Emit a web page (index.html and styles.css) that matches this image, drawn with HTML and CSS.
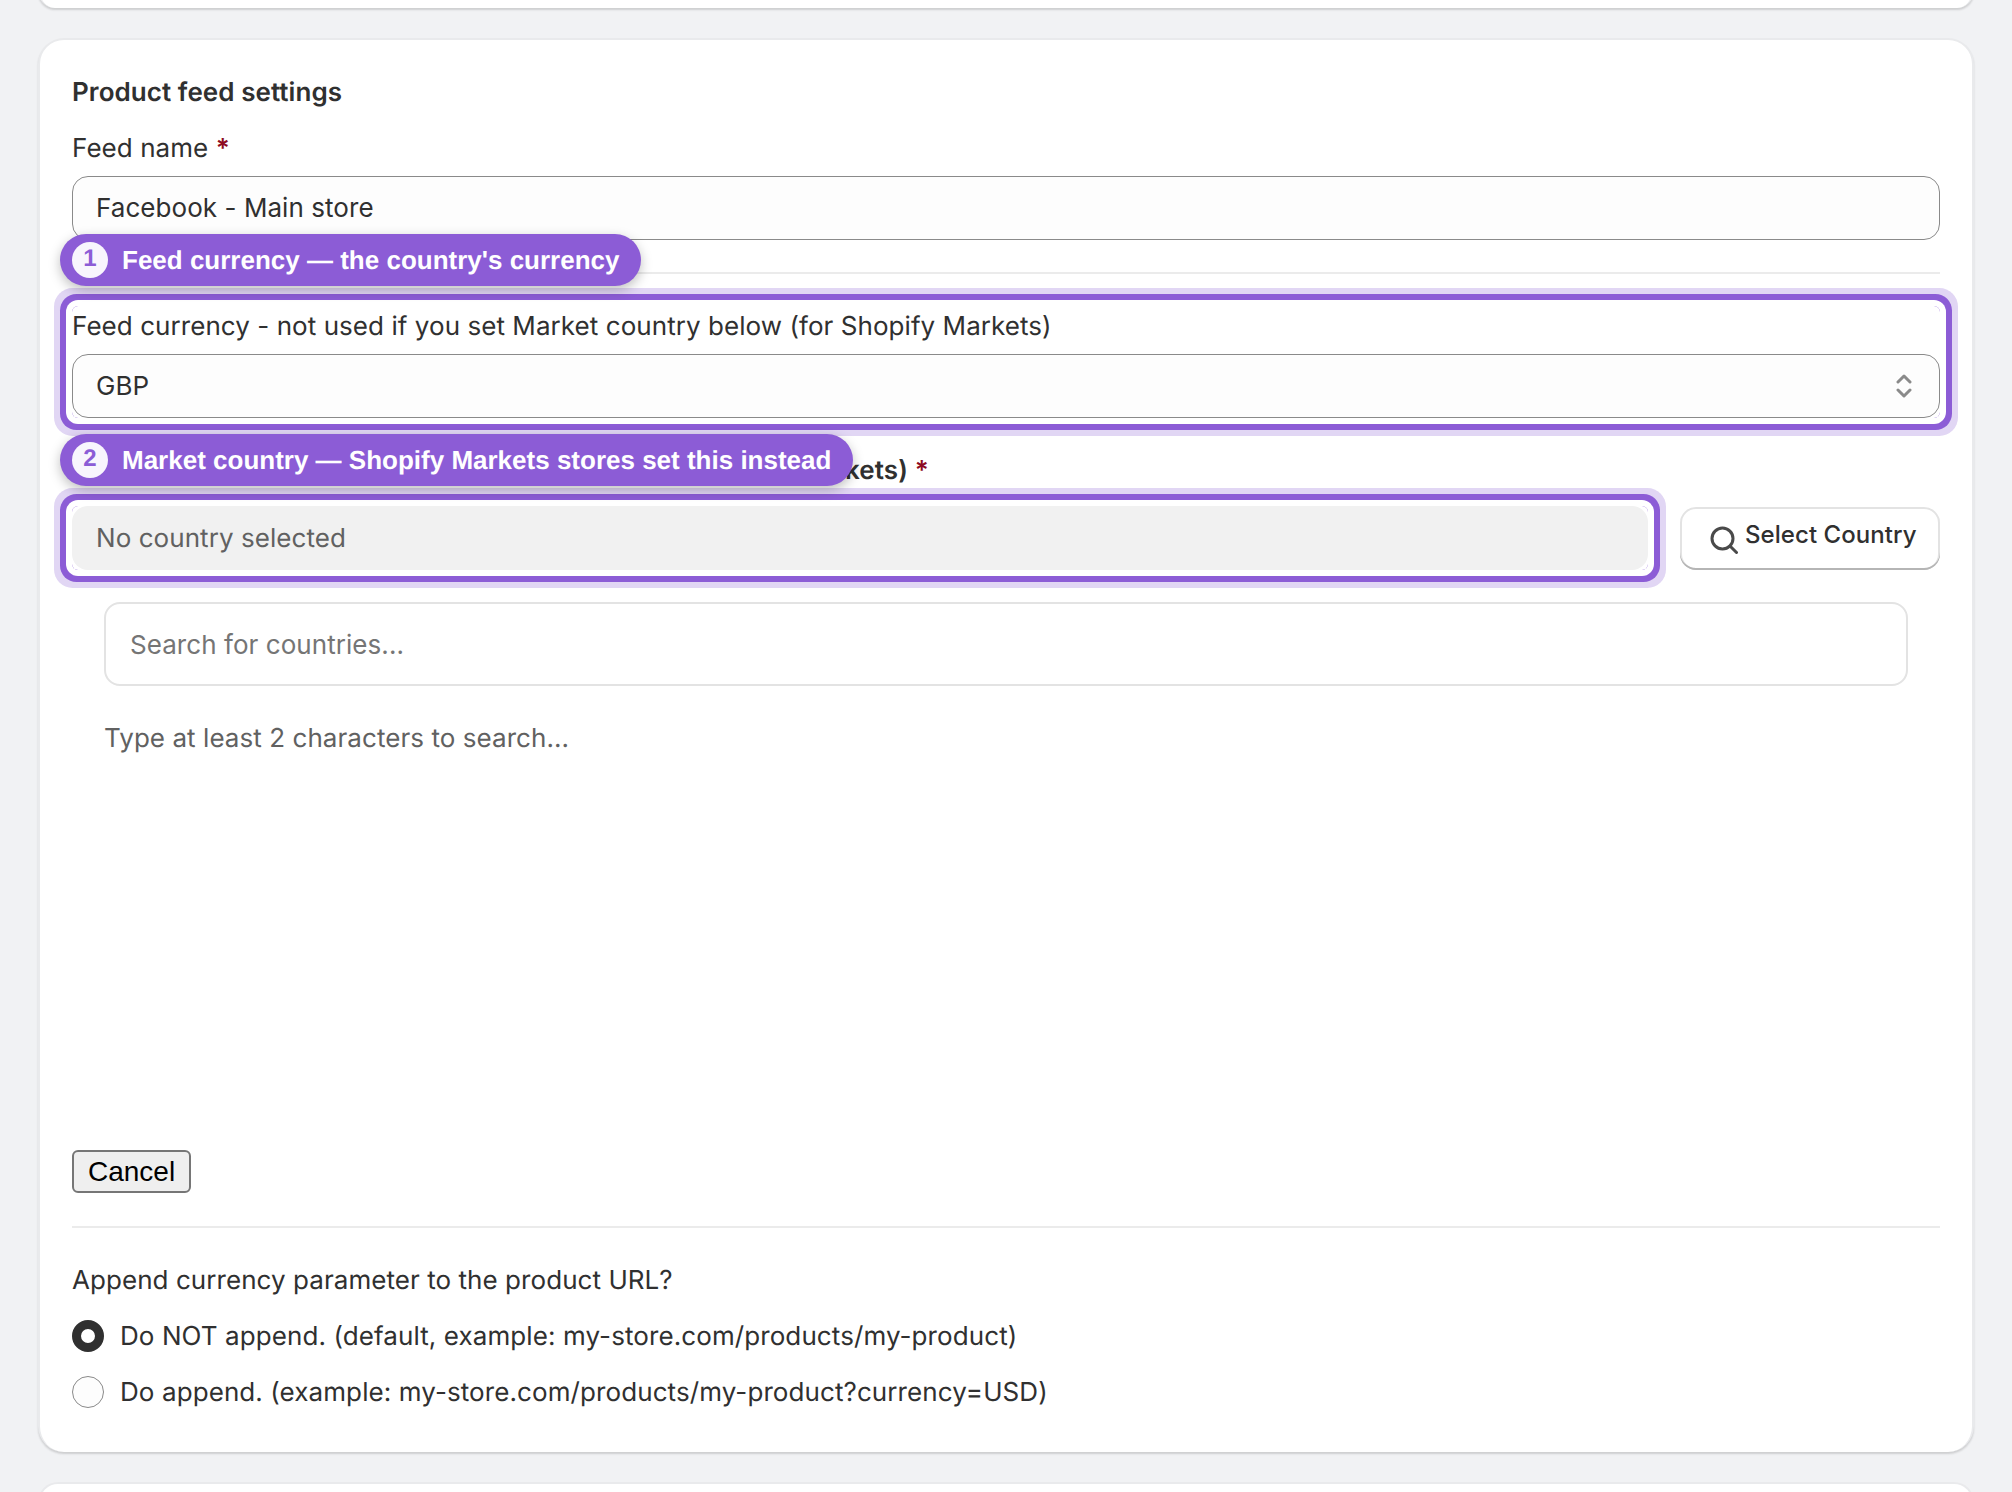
FILE: index.html
```html
<!DOCTYPE html>
<html lang="en">
<head>
<meta charset="utf-8">
<title>Product feed settings</title>
<link rel="stylesheet" href="styles.css">
</head>
<body>
<div class="page">
  <div class="card card-prev"></div>
  <section class="card card-main">
    <h2 class="title">Product feed settings</h2>
    <label class="label">Feed name <span class="req">*</span></label>
    <input class="control control-text" type="text" value="Facebook - Main store">
    <hr class="divider">
    <div class="target target-block">
      <div class="pill"><span class="pill-num">1</span>Feed currency — the country's currency</div>
      <label class="label">Feed currency - not used if you set Market country below (for Shopify Markets)</label>
      <div class="select-wrap">
        <select class="control select"><option>GBP</option></select>
        <svg class="chevrons" width="16" height="24" viewBox="0 0 16 24" fill="none" stroke="#8a8a8a" stroke-width="3" stroke-linecap="round" stroke-linejoin="round"><path d="M2 8l6-6 6 6"/><path d="M2 16l6 6 6-6"/></svg>
      </div>
    </div>
    <label class="label label-strong">Market country (leave this blank if you don't use Shopify Markets) <span class="req">*</span></label>
    <div class="country-row">
      <div class="target target-field">
        <div class="pill"><span class="pill-num">2</span>Market country — Shopify Markets stores set this instead</div>
        <div class="readonly">No country selected</div>
      </div>
      <button class="btn-select" type="button">
        <svg width="28" height="28" viewBox="0 0 28 28" fill="none" stroke="#4a4a4a" stroke-width="3" stroke-linecap="round"><circle cx="12.5" cy="12.5" r="10.5"/><path d="M20.5 20.5l6 6"/></svg>
        <span class="btn-text">Select Country</span>
      </button>
    </div>
    <div class="search-panel">
      <input class="search" type="text" placeholder="Search for countries...">
      <p class="hint">Type at least 2 characters to search...</p>
    </div>
    <button class="btn-cancel" type="button">Cancel</button>
    <hr class="divider divider-low">
    <p class="label">Append currency parameter to the product URL?</p>
    <label class="radio-row"><input class="radio" type="radio" name="append" checked>Do NOT append. (default, example: my-store.com/products/my-product)</label>
    <label class="radio-row"><input class="radio" type="radio" name="append">Do append. (example: my-store.com/products/my-product?currency=USD)</label>
  </section>
  <div class="card card-next"></div>
</div>
</body>
</html>
```
FILE: styles.css
```css
* { box-sizing: border-box; }
html, body { margin: 0; padding: 0; }
body {
  background: #f1f2f4;
  color: #303030;
  font-family: Inter, "Liberation Sans", sans-serif;
  font-size: 26px;
  line-height: 40px;
  letter-spacing: 0.058px;
  height: 1492px;
  overflow: hidden;
  text-rendering: geometricPrecision;
}
.page {
  display: flex;
  flex-direction: column;
  gap: 30px;
  height: 1492px;
  padding: 0 38px;
  overflow: hidden;
}
.card {
  flex: none;
  background: #fff;
  border: 2px solid #e9eaec;
  border-bottom: 0;
  border-radius: 26px;
  box-shadow: 0 2px 2px rgba(26, 26, 26, 0.16);
}
.card-prev {
  height: 34px;
  margin-top: -26px;
}
.card-next {
  height: 40px;
  box-shadow: none;
}
.card-main { padding: 32px 32px 40px; }
.title {
  height: 40px;
  margin: 0 0 16px;
  font-size: 26px;
  line-height: 41px;
  font-weight: 600;
}
.label {
  display: block;
  height: 40px;
  margin: 0 0 8px;
  line-height: 42px;
}
.label-strong {
  margin: 32px 0 16px;
  font-weight: 600;
  letter-spacing: 0.13px;
}
.req { color: #8e0b21; font-weight: 600; }
.control {
  display: block;
  width: 100%;
  height: 64px;
  padding: 0 23px;
  border: 1px solid #8a8a8a;
  border-radius: 16px;
  background: #fdfdfd;
  color: #303030;
  font: inherit;
  letter-spacing: inherit;
  outline: none;
}
.control-text { padding-bottom: 2px; }
.select { appearance: none; }
.select-wrap { position: relative; }
.chevrons {
  position: absolute;
  right: 28px;
  top: 20px;
}
.divider {
  height: 2px;
  margin: 32px 0;
  border: 0;
  background: #ebebeb;
}
.divider-low { margin: 33px 0 32px; }
.target {
  position: relative;
  border-radius: 6px;
  box-shadow:
    0 0 0 6px #fff,
    0 0 0 12px #8c5cd6,
    0 0 0 18px #e1d6f4;
}
.pill {
  position: absolute;
  left: -12px;
  top: -72px;
  z-index: 2;
  display: flex;
  align-items: center;
  gap: 14px;
  height: 52px;
  padding: 0 22px 0 12px;
  border-radius: 26px;
  background: #8c5cd6;
  color: #fff;
  font-family: "Liberation Sans", Arial, sans-serif;
  font-weight: 700;
  letter-spacing: 0;
  white-space: nowrap;
  box-shadow: 0 4px 12px rgba(0, 0, 0, 0.25);
}
.pill-num {
  display: flex;
  align-items: center;
  justify-content: center;
  width: 36px;
  height: 36px;
  padding-bottom: 3px;
  border-radius: 50%;
  background: #f8f5fd;
  color: #8c5cd6;
  font-size: 24px;
  font-weight: 700;
}
.country-row {
  display: flex;
  gap: 32px;
  align-items: center;
}
.target-field { flex: 1; }
.readonly {
  height: 64px;
  padding: 0 24px;
  border-radius: 16px;
  background: #f1f1f1;
  color: #616161;
  line-height: 65px;
}
.btn-select {
  display: flex;
  align-items: center;
  gap: 7px;
  width: 260px;
  height: 63px;
  padding: 4px 0 0 30px;
  border: 0;
  border-radius: 16px;
  background: #fff;
  color: #303030;
  font: inherit;
  font-size: 24px;
  font-weight: 550;
  letter-spacing: inherit;
  box-shadow: inset 0 -2px 0 #b5b5b5, inset 0 0 0 2px #e3e3e3;
}
.btn-text { padding-bottom: 10px; }
.search-panel {
  height: 548px;
  margin: 32px 32px 0;
}
.search {
  display: block;
  width: 100%;
  height: 84px;
  padding: 0 24px;
  border: 2px solid #e3e3e3;
  border-radius: 16px;
  background: #fff;
  color: #303030;
  font: inherit;
  letter-spacing: inherit;
  outline: none;
}
.search::placeholder { color: #757575; opacity: 1; }
.hint {
  height: 40px;
  margin: 32px 0 0;
  color: #616161;
  line-height: 42px;
}
.btn-cancel {
  display: block;
  height: 43px;
  padding: 0 14px;
  border: 2px solid #767676;
  border-radius: 6px;
  background: #efefef;
  color: #000;
  font-family: "Liberation Sans", Arial, sans-serif;
  font-size: 28px;
  line-height: 39px;
  letter-spacing: 0;
}
.radio-row {
  display: flex;
  align-items: flex-start;
  gap: 16px;
  height: 40px;
  margin-top: 16px;
  line-height: 42px;
  letter-spacing: 0.09px;
}
.radio {
  appearance: none;
  flex: none;
  width: 32px;
  height: 32px;
  margin: 4px 0 0;
  border: 1px solid #8a8a8a;
  border-radius: 50%;
  background: #fdfdfd;
}
.radio:checked {
  border: 9px solid #303030;
  background: #fff;
}
```
